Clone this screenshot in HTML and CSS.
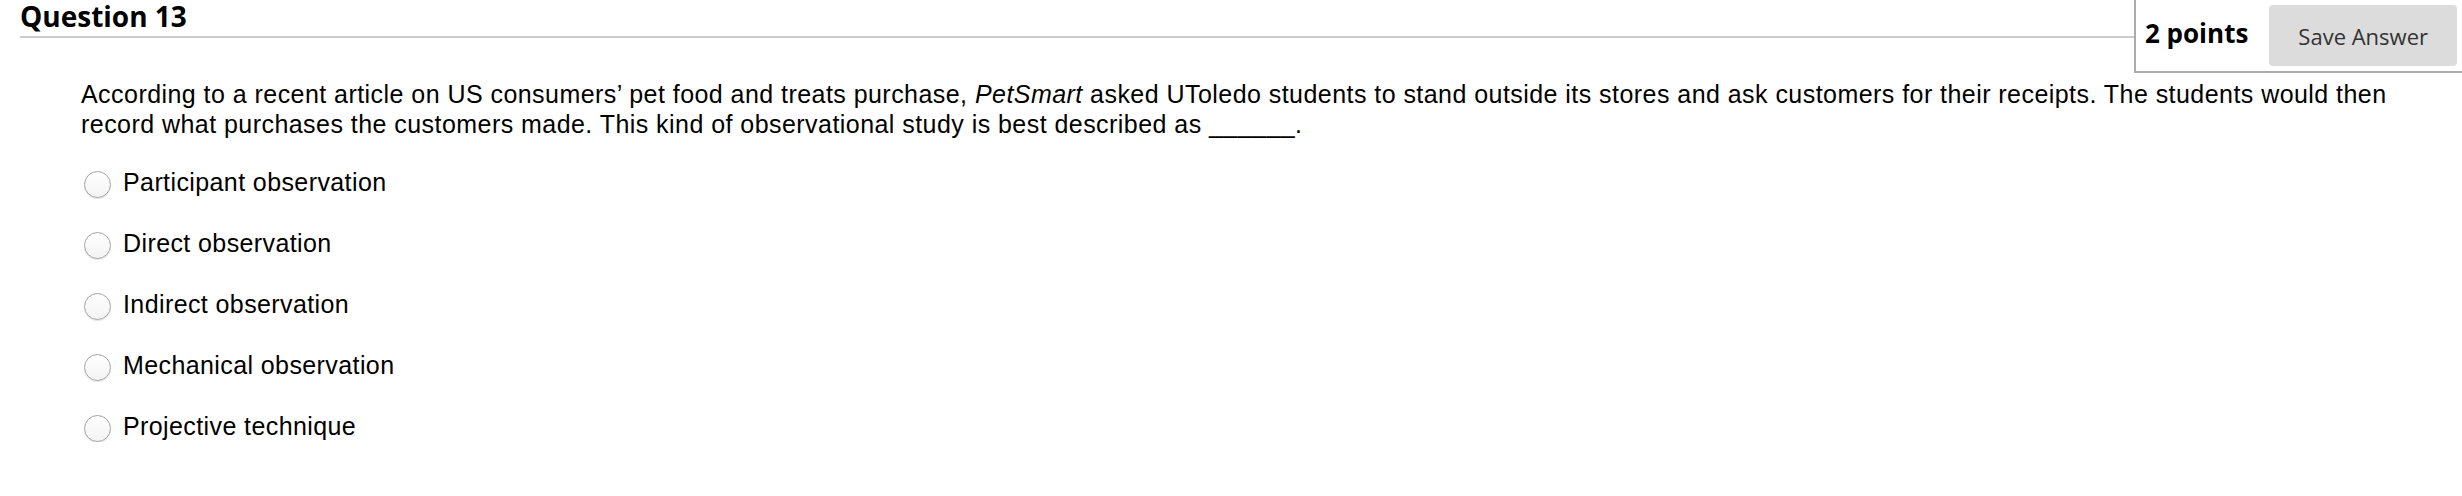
FILE: index.html
```html
<!DOCTYPE html>
<html lang="en">
<head>
<meta charset="utf-8">
<title>Question 13</title>
<link rel="stylesheet" href="styles.css">
</head>
<body>
<div class="question">
  <div class="q-header">
    <div class="q-title-wrap">
      <h3 class="q-title">Question 13</h3>
    </div>
    <div class="points-box">
      <span class="points">2 points</span>
      <button class="save-btn" type="button">Save Answer</button>
    </div>
  </div>
  <div class="q-body">
    <p class="q-text">According to a recent article on US consumers’ pet food and treats purchase, <em>PetSmart</em> asked UToledo students to stand outside its stores and ask customers for their receipts. The students would then record what purchases the customers made. This kind of observational study is best described as ______.</p>
    <ul class="options">
      <li class="option"><input class="radio" type="radio" name="q13" id="o1"><label for="o1">Participant observation</label></li>
      <li class="option"><input class="radio" type="radio" name="q13" id="o2"><label for="o2">Direct observation</label></li>
      <li class="option"><input class="radio" type="radio" name="q13" id="o3"><label for="o3">Indirect observation</label></li>
      <li class="option"><input class="radio" type="radio" name="q13" id="o4"><label for="o4">Mechanical observation</label></li>
      <li class="option"><input class="radio" type="radio" name="q13" id="o5"><label for="o5">Projective technique</label></li>
    </ul>
  </div>
</div>
</body>
</html>
```

FILE: styles.css
```css
html, body {
  margin: 0;
  padding: 0;
  background: #ffffff;
}

body {
  font-family: "Liberation Sans", Arial, sans-serif;
  color: #000;
}

.q-header {
  display: flex;
  align-items: flex-start;
}

.q-title-wrap {
  flex: 1;
  margin-left: 20px;
  border-bottom: 2px solid #cccccc;
  padding-bottom: 4px;
}

.q-title {
  margin: 0;
  font-family: "Open Sans", sans-serif;
  font-weight: 700;
  font-size: 28px;
  line-height: 32px;
  color: #000;
}

.points-box {
  display: flex;
  align-items: flex-start;
  border-left: 2px solid #aaaaaa;
  border-bottom: 2px solid #aaaaaa;
  padding: 5px 5px 5px 9px;
}

.points {
  font-family: "Open Sans", sans-serif;
  font-weight: 700;
  font-size: 26px;
  line-height: 36px;
  margin-top: 10px;
  color: #000;
}

.save-btn {
  margin-left: 21px;
  height: 61px;
  padding: 0 29px;
  border: none;
  border-radius: 4px;
  background: #dcdcdc;
  font-family: "Open Sans", sans-serif;
  font-size: 22px;
  color: #333333;
}

.q-body {
  padding: 6px 30px 0 81px;
}

.q-text {
  margin: 0;
  font-size: 25px;
  letter-spacing: 0.45px;
  line-height: 30px;
}

.options {
  list-style: none;
  margin: 28px 0 0 0;
  padding: 0 0 0 3px;
  display: flex;
  flex-direction: column;
  gap: 30px;
}

.option {
  display: flex;
  align-items: flex-start;
  gap: 12px;
  font-size: 25px;
  letter-spacing: 0.4px;
  line-height: 30px;
}

.radio {
  appearance: none;
  -webkit-appearance: none;
  margin: 4px 0 0 0;
  width: 27px;
  height: 27px;
  border-radius: 50%;
  border: 1.5px solid #a4a4a4;
  background: linear-gradient(#ffffff, #f3f3f3);
  box-shadow: 0 1px 1px rgba(0, 0, 0, 0.12);
  box-sizing: border-box;
  flex: none;
}
```
